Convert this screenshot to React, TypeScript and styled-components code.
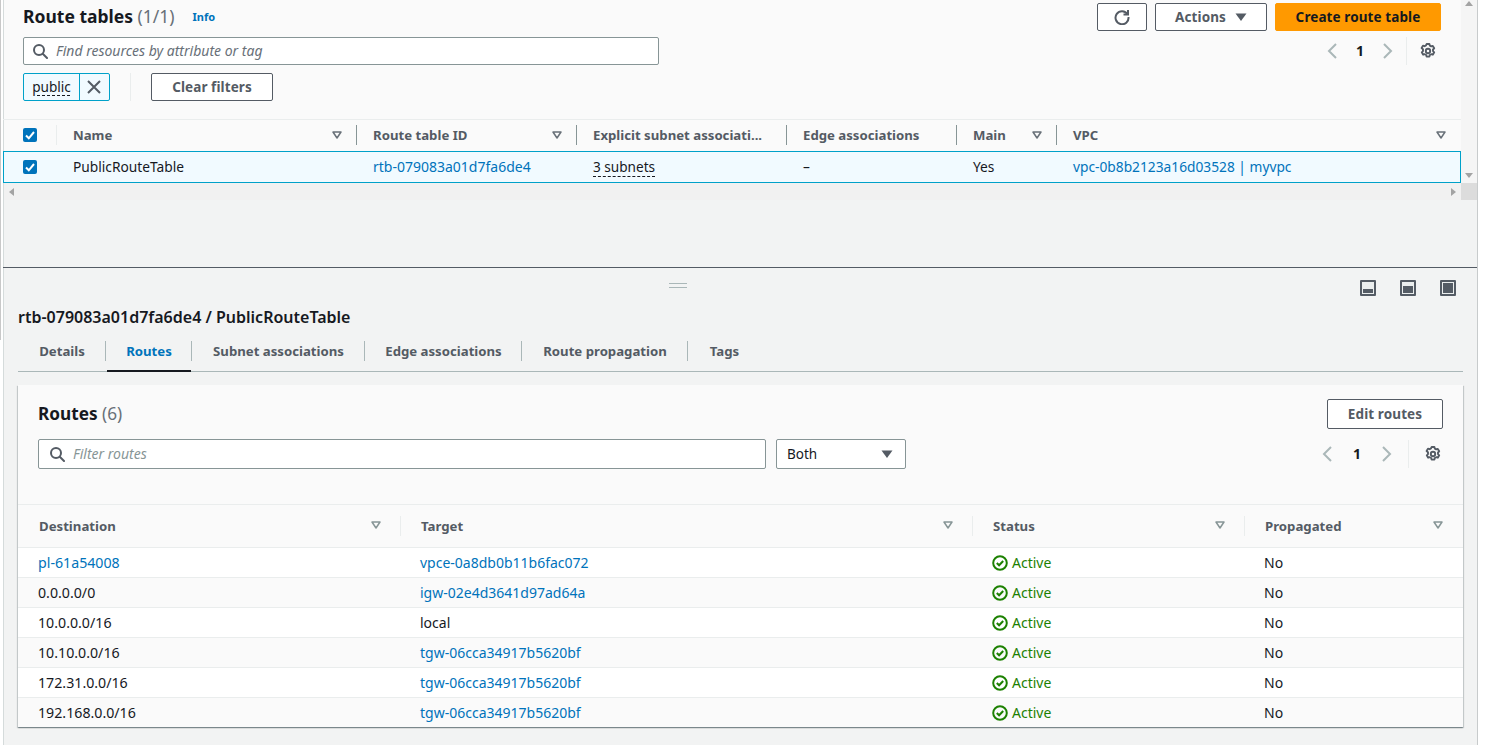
import React from "react";
import styled, { createGlobalStyle, css } from "styled-components";

const Global = createGlobalStyle`
  html, body { margin: 0; padding: 0; background: #fff; overflow: hidden; }
  body { font-family: "Noto Sans", "Open Sans", Arial, sans-serif; font-size: 14px; line-height: 20px; color: #16191f; }
  * { box-sizing: border-box; }
`;

const edge = css`
  box-shadow: inset 1px 0 0 #d5dbdb;
`;

const Frame = styled.div`
  position: relative; padding-left: 3px; width: 1490px; height: 745px;
`;
const GutterStrip = styled.div`
  position: absolute; left: 0; top: 0; width: 1px; height: 340px; background: #c8c8c8;
`;
const Page = styled.div`
  width: 1475px; height: 745px; display: flex; flex-direction: column;
  background: #f2f3f3; border-right: 1px solid #c8cbcc;
`;
const TopPanel = styled.section`
  height: 268px; display: flex; border-bottom: 1px solid #545b64; flex: none; background: #f2f3f3; ${edge}
`;
const TopMain = styled.div`
  flex: 1; min-width: 0; height: 200px; display: flex; flex-direction: column;
`;
const VScroll = styled.div`
  width: 16px; height: 200px; flex: none; display: flex; flex-direction: column; align-items: center; background: #f5f5f5;
`;
const VTrack = styled.div`
  height: 183px; width: 100%; display: flex; flex-direction: column; justify-content: space-between; align-items: center; padding: 0 0 4px;
`;
const VCorner = styled.div`
  height: 17px; width: 100%; background: #dcdcdc;
`;
const Arrow = styled.svg`
  width: 8px; height: 8px; fill: #a3a3a3; display: block;
`;
const Toolbar = styled.div`
  display: flex; justify-content: space-between; padding: 3px 20px 0; height: 120px; flex: none; background: #fafafa;
  border-bottom: 1px solid #eaeded; ${edge}
`;
const ToolLeft = styled.div`
  display: flex; flex-direction: column; width: 636px;
`;
const TitleRow = styled.div`
  display: flex; align-items: center; height: 28px; gap: 18px;
`;
const Title = styled.h1`
  margin: -2px 0 0; font-size: 17.5px; font-weight: 700; line-height: 26px; color: #16191f;
`;
const Count = styled.span`
  font-weight: 400; color: #687078;
`;
const Info = styled.a`
  font-size: 11px; font-weight: 700; color: #0073bb;
`;
const SearchBox = styled.div<{ $w?: string; $h: number; $pad: number; $gap: number; $top?: number }>`
  width: ${p => p.$w ?? "100%"}; height: ${p => p.$h}px; display: flex; align-items: center; gap: ${p => p.$gap}px; padding: 0 ${p => p.$pad}px;
  margin-top: ${p => p.$top ?? 0}px;
  background: #fff; border: 1px solid #879596; border-radius: 2px; flex: none;
`;
const SearchText = styled.span<{ $light?: boolean }>`
  font-style: italic; font-size: 14px; color: ${p => p.$light ? "#879596" : "#687078"};
`;
const FilterRow = styled.div`
  display: flex; align-items: center; height: 28px; margin-top: 8px;
`;
const Token = styled.div`
  display: flex; height: 28px; width: 87px; border: 1px solid #00a1c9; border-radius: 2px; background: #f1faff;
`;
const TokenLabel = styled.span`
  width: 56px; text-align: center; line-height: 26px; border-right: 1px solid #00a1c9; font-size: 13.6px; color: #16191f;
  text-decoration: underline dashed #16191f 1px; text-underline-offset: 3px;
`;
const TokenClose = styled.span`
  flex: 1; display: flex; align-items: center; justify-content: center; padding-right: 2px;
`;
const VSep = styled.span<{ $x?: number }>`
  width: 1px; height: 28px; background: #eaeded; margin: 0 ${p => p.$x ?? 20}px; flex: none;
`;
const Button = styled.button<{ $w: number; $h?: number; $primary?: boolean }>`
  width: ${p => p.$w}px; height: ${p => p.$h ?? 28}px; flex: none; padding: 0; display: flex; align-items: center; justify-content: center; gap: 9px;
  font: 700 13.5px/20px "Noto Sans", Arial, sans-serif; border-radius: 2px; letter-spacing: .1px;
  border: 1px solid ${p => p.$primary ? "#ff9900" : "#545b64"};
  background: ${p => p.$primary ? "#ff9900" : "#fff"};
  color: ${p => p.$primary ? "#16191f" : "#545b64"};
`;
const ToolRight = styled.div`
  display: flex; flex-direction: column; align-items: flex-end;
`;
const Buttons = styled.div`
  display: flex; gap: 8px;
`;
const Pager = styled.div<{ $top: number; $h: number; $end: number }>`
  display: flex; align-items: center; height: ${p => p.$h}px; margin-top: ${p => p.$top}px; padding-right: ${p => p.$end}px;
`;
const PageNum = styled.span<{ $w: number }>`
  width: ${p => p.$w}px; text-align: center; font-weight: 700; font-size: 14px; color: #16191f;
`;
const GridRow = styled.div<{ $cols: string; $h: number; $alt?: boolean }>`
  display: grid; grid-template-columns: ${p => p.$cols}; height: ${p => p.$h}px; align-items: center; flex: none;
  background: ${p => p.$alt ? "#fafafa" : "transparent"};
`;
const TopHead = styled(GridRow)`
  background: #fafafa; padding-bottom: 2px; ${edge}
`;
const HeadCell = styled.div<{ $last?: boolean; $faint?: boolean; $pad?: number; $end?: number }>`
  display: flex; align-items: center; justify-content: space-between; height: 20px; font-weight: 700; font-size: 13.2px; color: #545b64;
  padding: 0 ${p => p.$end ?? 14}px 0 ${p => p.$pad ?? 16}px; white-space: nowrap; overflow: hidden;
  border-right: 1px solid ${p => p.$last ? "transparent" : p.$faint ? "#eaeded" : "#879596"};
`;
const CheckCell = styled.div<{ $sep?: boolean }>`
  padding-left: 20px; height: 20px; display: flex; align-items: center;
  border-right: 1px solid ${p => p.$sep ? "#eaeded" : "transparent"};
`;
const Selected = styled(GridRow)`
  border: 1px solid #00a1c9; background: #f1faff;
`;
const SelCheck = styled(CheckCell)`
  padding-left: 19px;
`;
const Cell = styled.div<{ $pad?: number; $size?: number }>`
  padding-left: ${p => p.$pad ?? 16}px; white-space: nowrap; font-size: ${p => p.$size ?? 13.75}px; color: #16191f;
`;
const Link = styled.a<{ $size?: number }>`
  color: #0073bb; font-size: ${p => p.$size ?? 14}px;
`;
const Dashed = styled.span`
  border-bottom: 1px dashed #16191f; color: #16191f; font-size: 13.6px;
`;
const HScroll = styled.div`
  height: 17px; background: #f1f1f1; display: flex; justify-content: space-between; align-items: center; padding: 0 4px 0 5px; flex: none; ${edge}
`;
const Bottom = styled.section`
  flex: 1; padding: 0 0 0 15px; display: flex; flex-direction: column; ${edge}
`;
const SplitBar = styled.div`
  height: 40px; display: flex; align-items: center; flex: none;
`;
const Grip = styled.div`
  width: 18px; height: 5px; border-top: 1px solid #aab7b8; border-bottom: 1px solid #aab7b8; margin: -5px 0 0 651px;
`;
const SplitIcons = styled.div`
  display: flex; gap: 24px; margin-left: auto; margin-right: 21px;
`;
const SubTitle = styled.h2`
  margin: -1px 0 0; font-size: 16px; line-height: 20px; font-weight: 600; color: #16191f;
`;
const Tabs = styled.nav`
  display: flex; height: 32px; margin-top: 13px; border-bottom: 1px solid #aab7b8; flex: none; width: 1445px;
`;
const Tab = styled.div<{ $active?: boolean; $w: number; $sep?: boolean }>`
  width: ${p => p.$w}px; height: 31px; display: flex; align-items: center; justify-content: center; flex: none; position: relative;
  font-weight: 700; font-size: 13.2px; line-height: 20px; color: ${p => p.$active ? "#0073bb" : "#545b64"}; padding-bottom: 9px;
  &::after {
    content: ""; position: absolute; right: 0; top: 1px; height: 20px; width: 1px;
    background: ${p => p.$sep ? "#aab7b8" : "transparent"};
  }
  &::before {
    content: ""; position: absolute; left: 1px; right: 1px; bottom: -1px; height: 2px;
    background: ${p => p.$active ? "#16191f" : "transparent"};
  }
`;
const Card = styled.div`
  width: 1445px; margin-top: 13px; height: 342px; background: #fff; box-shadow: 0 1px 1px 0 rgba(0,28,36,.3), 1px 1px 1px 0 rgba(0,28,36,.15), -1px 1px 1px 0 rgba(0,28,36,.15);
  display: flex; flex-direction: column; flex: none;
`;
const CardHead = styled.div`
  height: 120px; flex: none; background: #fafafa; padding: 14px 20px 0; display: flex; justify-content: space-between; border-bottom: 1px solid #eaeded;
`;
const CardLeft = styled.div`
  display: flex; flex-direction: column; width: 868px;
`;
const CardTitle = styled.h3`
  margin: 0; height: 30px; font-size: 17.2px; line-height: 30px; font-weight: 700; color: #16191f;
`;
const CardFilters = styled.div`
  display: flex; gap: 10px; margin-top: 10px;
`;
const Select = styled.div`
  width: 130px; height: 30px; background: #fff; border: 1px solid #879596; border-radius: 2px; flex: none;
  display: flex; align-items: center; justify-content: space-between; padding: 0 12px 0 10px; font-size: 13.5px; color: #16191f;
`;
const RouteHead = styled(GridRow)`
  background: #fafafa;
`;
const Row = styled(GridRow)`
  border-top: 1px solid #eaeded;
`;
const Status = styled.div`
  display: flex; align-items: center; gap: 4px; padding-left: 20px; color: #1d8102; font-size: 14px;
`;
const SortIcon = styled.svg<{ $lift?: number }>`
  flex: none; margin-top: -${p => p.$lift ?? 0}px;
`;

const Search = () => (
  <svg width="16" height="16" viewBox="0 0 16 16" fill="none" stroke="#545b64" strokeWidth="2"><circle cx="7" cy="7" r="5" /><path d="M11 11l4 4" strokeLinecap="round" /></svg>
);
const Check = () => (
  <svg width="14" height="14" viewBox="0 0 14 14"><rect width="14" height="14" rx="2" fill="#0073bb" /><path d="M3 7.5l2.8 2.8L11 4" fill="none" stroke="#fff" strokeWidth="2" /></svg>
);
const SortCaret = ({ c = "#687078", lift }: { c?: string; lift?: number }) => (
  <SortIcon $lift={lift} width="10" height="8" viewBox="0 0 10 8" fill="none" stroke={c} strokeWidth="1.5"><path d="M1 1h8L5 7z" strokeLinejoin="round" /></SortIcon>
);
const Caret = () => (
  <svg width="12" height="8" viewBox="0 0 12 8" style={{ flex: "none" }}><path d="M0.5 0.5h11L6 8z" fill="#545b64" /></svg>
);
const Chevron = ({ left }: { left?: boolean }) => (
  <svg width="10" height="16" viewBox="0 0 10 16" fill="none" stroke="#aab7b8" strokeWidth="2" style={{ flex: "none" }}><path d={left ? "M9 1L2 8l7 7" : "M1 1l7 7-7 7"} /></svg>
);
const Gear = () => (
  <svg width="16" height="16" viewBox="0 0 16 16" fill="none" stroke="#545b64" strokeWidth="1.9" strokeLinejoin="round" style={{ flex: "none" }}>
    <circle cx="8" cy="8" r="2.2" />
    <path d="M6.6 1h2.8l.4 1.6 1.4.8 1.6-.5 1.4 2.4-1.2 1.2v1.6l1.2 1.2-1.4 2.4-1.6-.5-1.4.8-.4 1.6H6.6l-.4-1.6-1.4-.8-1.6.5-1.4-2.4 1.2-1.2V6.3L1.6 5.1 3 2.7l1.6.5 1.4-.8z" />
  </svg>
);
const Refresh = () => (
  <svg width="16" height="16" viewBox="0 0 16 16" fill="none" stroke="#545b64" strokeWidth="2"><path d="M13.5 5.2A6.5 6.5 0 1 0 14.5 8" /><path d="M14 1v4.6H9.5" /></svg>
);
const Close = () => (
  <svg width="14" height="14" viewBox="0 0 14 14" fill="none" stroke="#545b64" strokeWidth="2"><path d="M1 1l12 12M13 1L1 13" /></svg>
);
const Ok = () => (
  <svg width="16" height="16" viewBox="0 0 16 16" fill="none" stroke="#1d8102" strokeWidth="2" style={{ flex: "none" }}><circle cx="8" cy="8" r="6.8" /><path d="M4.8 8l2.3 2.3 4.1-4.3" /></svg>
);
const Split = ({ y, h }: { y: number; h: number }) => (
  <svg width="16" height="16" viewBox="0 0 16 16">
    <rect x="0" y="0" width="16" height="16" rx="1" fill="#545b64" />
    <rect x="2" y="2" width="12" height="12" fill="#eaeded" />
    <rect x="3" y={y} width="10" height={h} fill="#545b64" />
  </svg>
);

const topHeads = ["Name", "Route table ID", "Explicit subnet associati...", "Edge associations", "Main", "VPC"];
const routes = [
  ["pl-61a54008", "vpce-0a8db0b11b6fac072"],
  ["0.0.0.0/0", "igw-02e4d3641d97ad64a"],
  ["10.0.0.0/16", "local"],
  ["10.10.0.0/16", "tgw-06cca34917b5620bf"],
  ["172.31.0.0/16", "tgw-06cca34917b5620bf"],
  ["192.168.0.0/16", "tgw-06cca34917b5620bf"],
];
const routeHeads = ["Destination", "Target", "Status", "Propagated"];
const tabs: [string, number][] = [["Details", 88], ["Routes", 86], ["Subnet associations", 173], ["Edge associations", 157], ["Route propagation", 166], ["Tags", 73]];

export default function App() {
  return (
    <Frame>
      <Global />
      <GutterStrip />
      <Page>
        <TopPanel>
          <TopMain>
            <Toolbar>
              <ToolLeft>
                <TitleRow>
                  <Title>Route tables <Count>(1/1)</Count></Title>
                  <Info>Info</Info>
                </TitleRow>
                <SearchBox $h={28} $pad={8} $gap={8} $top={6}><Search /><SearchText>Find resources by attribute or tag</SearchText></SearchBox>
                <FilterRow>
                  <Token><TokenLabel>public</TokenLabel><TokenClose><Close /></TokenClose></Token>
                  <VSep />
                  <Button $w={122}>Clear filters</Button>
                </FilterRow>
              </ToolLeft>
              <ToolRight>
                <Buttons>
                  <Button $w={50}><Refresh /></Button>
                  <Button $w={112}>Actions <Caret /></Button>
                  <Button $w={166} $primary>Create route table</Button>
                </Buttons>
                <Pager $top={6} $h={28} $end={5}>
                  <Chevron left />
                  <PageNum $w={46}>1</PageNum>
                  <Chevron />
                  <VSep $x={13} />
                  <Gear />
                </Pager>
              </ToolRight>
            </Toolbar>
            <TopHead $cols="54px 300px 220px 210px 170px 100px 1fr" $h={31}>
              <CheckCell $sep><Check /></CheckCell>
              {topHeads.map((h, i) => (
                <HeadCell key={h} $last={i === 5}>
                  <span>{h}</span>
                  {h !== "Explicit subnet associati..." && h !== "Edge associations" && <SortCaret />}
                </HeadCell>
              ))}
            </TopHead>
            <Selected $cols="53px 300px 220px 210px 170px 100px 1fr" $h={32}>
              <SelCheck><Check /></SelCheck>
              <Cell>PublicRouteTable</Cell>
              <Cell><Link>rtb-079083a01d7fa6de4</Link></Cell>
              <Cell><Dashed>3 subnets</Dashed></Cell>
              <Cell>–</Cell>
              <Cell>Yes</Cell>
              <Cell><Link $size={13.75}>vpc-0b8b2123a16d03528 | myvpc</Link></Cell>
            </Selected>
            <HScroll>
              <Arrow viewBox="0 0 8 8"><path d="M6 0v8L1 4z" /></Arrow>
              <Arrow viewBox="0 0 8 8"><path d="M2 0v8l5-4z" /></Arrow>
            </HScroll>
          </TopMain>
          <VScroll>
            <VTrack>
              <Arrow viewBox="0 0 8 8"><path d="M0 6h8L4 1z" /></Arrow>
              <Arrow viewBox="0 0 8 8"><path d="M0 2h8L4 7z" /></Arrow>
            </VTrack>
            <VCorner />
          </VScroll>
        </TopPanel>
        <Bottom>
          <SplitBar>
            <Grip />
            <SplitIcons>
              <Split y={9} h={4} />
              <Split y={6} h={7} />
              <Split y={3} h={10} />
            </SplitIcons>
          </SplitBar>
          <SubTitle>rtb-079083a01d7fa6de4 / PublicRouteTable</SubTitle>
          <Tabs>
            {tabs.map(([t, w], i) => (
              <Tab key={t} $w={w} $active={t === "Routes"} $sep={i < 5}>{t}</Tab>
            ))}
          </Tabs>
          <Card>
            <CardHead>
              <CardLeft>
                <CardTitle>Routes <Count>(6)</Count></CardTitle>
                <CardFilters>
                  <SearchBox $w="728px" $h={30} $pad={10} $gap={8}><Search /><SearchText $light>Filter routes</SearchText></SearchBox>
                  <Select>Both <Caret /></Select>
                </CardFilters>
              </CardLeft>
              <ToolRight>
                <Button $w={116} $h={30}>Edit routes</Button>
                <Pager $top={10} $h={30} $end={2}>
                  <Chevron left />
                  <PageNum $w={50}>1</PageNum>
                  <Chevron />
                  <VSep $x={16} />
                  <Gear />
                </Pager>
              </ToolRight>
            </CardHead>
            <RouteHead $cols="383px 572px 272px 1fr" $h={42}>
              {routeHeads.map((h, i) => (
                <HeadCell key={h} $faint $last={i === 3} $pad={i === 0 ? 21 : 20} $end={19}>
                  <span>{h}</span>
                  <SortCaret c="#879596" lift={2} />
                </HeadCell>
              ))}
            </RouteHead>
            {routes.map(([d, t], i) => (
              <Row key={d} $cols="382px 572px 272px 1fr" $h={30} $alt={i % 2 === 1}>
                <Cell $pad={20} $size={14.2}>{i === 0 ? <Link $size={14.2}>{d}</Link> : d}</Cell>
                <Cell $pad={20} $size={14}>{t === "local" ? t : <Link>{t}</Link>}</Cell>
                <Status><Ok />Active</Status>
                <Cell $pad={20} $size={14}>No</Cell>
              </Row>
            ))}
          </Card>
        </Bottom>
      </Page>
    </Frame>
  );
}
